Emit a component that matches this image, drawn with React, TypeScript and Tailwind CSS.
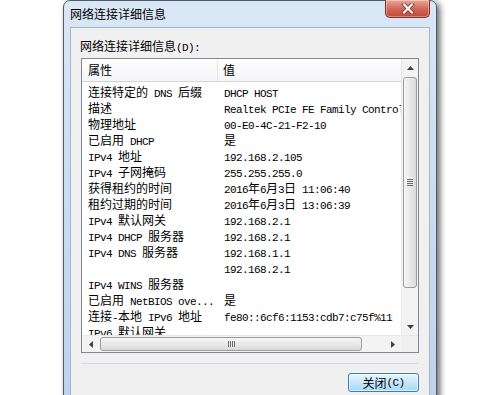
import React from 'react'

const CJK = /[\u3000-\u303f\u4e00-\u9fff\uff00-\uffef]/

// SimSun-like mix: CJK glyphs 12px wide, Latin half width (6px)
function Txt({ s }: { s: string }) {
  const parts = s.split(/([\u3000-\u303f\u4e00-\u9fff\uff00-\uffef]+)/).filter(Boolean)
  return (
    <>
      {parts.map((p, i) =>
        CJK.test(p) ? (
          <span key={i} className="font-['Noto_Sans_CJK_SC',sans-serif] text-[12px]">{p}</span>
        ) : (
          <span key={i} className="font-['Liberation_Mono',monospace] text-[11px] tracking-[-0.6px] whitespace-pre">{p}</span>
        )
      )}
    </>
  )
}

const rows: [string, string][] = [
  ['连接特定的 DNS 后缀', 'DHCP HOST'],
  ['描述', 'Realtek PCIe FE Family Controller'],
  ['物理地址', '00-E0-4C-21-F2-10'],
  ['已启用 DHCP', '是'],
  ['IPv4 地址', '192.168.2.105'],
  ['IPv4 子网掩码', '255.255.255.0'],
  ['获得租约的时间', '2016年6月3日 11:06:40'],
  ['租约过期的时间', '2016年6月3日 13:06:39'],
  ['IPv4 默认网关', '192.168.2.1'],
  ['IPv4 DHCP 服务器', '192.168.2.1'],
  ['IPv4 DNS 服务器', '192.168.1.1'],
  ['', '192.168.2.1'],
  ['IPv4 WINS 服务器', ''],
  ['已启用 NetBIOS ove...', '是'],
  ['连接-本地 IPv6 地址', 'fe80::6cf6:1153:cdb7:c75f%11'],
  ['IPv6 默认网关', ''],
]

function Arrow({ dir }: { dir: 'up' | 'down' | 'left' | 'right' }) {
  const pts = {
    up: '0,4 3.5,0 7,4',
    down: '0,0 3.5,4 7,0',
    left: '4,0 0,3.5 4,7',
    right: '0,0 4,3.5 0,7',
  }[dir]
  const vertical = dir === 'up' || dir === 'down'
  return (
    <svg width={vertical ? 7 : 4} height={vertical ? 4 : 7} viewBox={vertical ? '0 0 7 4' : '0 0 4 7'}>
      <polygon points={pts} fill="#404040" />
    </svg>
  )
}

function VScroll() {
  return (
    <div className="w-[17px] flex flex-col bg-[#f3f3f3] border-l border-[#e8e8e8]">
      <div className="h-[17px] flex items-center justify-center">
        <Arrow dir="up" />
      </div>
      <div className="flex-1 flex flex-col">
        <div className="mt-[1px] mx-[1px] h-[211px] rounded-[3px] border border-[#9d9d9d] bg-gradient-to-r from-[#f6f6f6] via-[#e9e9e9] to-[#d9d9d9] flex flex-col items-center justify-center gap-[1px]">
          <div className="w-[6px] h-px bg-[#6d6d6d]" />
          <div className="w-[6px] h-px bg-[#6d6d6d]" />
          <div className="w-[6px] h-px bg-[#6d6d6d]" />
          <div className="w-[6px] h-px bg-[#6d6d6d]" />
        </div>
      </div>
      <div className="h-[17px] flex items-center justify-center">
        <Arrow dir="down" />
      </div>
    </div>
  )
}

function HScroll() {
  return (
    <div className="h-[17px] flex bg-[#f3f3f3] border-t border-[#e8e8e8]">
      <div className="w-[17px] flex items-center justify-center">
        <Arrow dir="left" />
      </div>
      <div className="flex-1 flex">
        <div className="ml-[1px] my-[1px] w-[262px] rounded-[3px] border border-[#9d9d9d] bg-gradient-to-b from-[#f6f6f6] via-[#e9e9e9] to-[#d9d9d9] flex items-center justify-center gap-[1px]">
          <div className="h-[6px] w-px bg-[#6d6d6d]" />
          <div className="h-[6px] w-px bg-[#6d6d6d]" />
          <div className="h-[6px] w-px bg-[#6d6d6d]" />
          <div className="h-[6px] w-px bg-[#6d6d6d]" />
        </div>
      </div>
      <div className="w-[17px] flex items-center justify-center">
        <Arrow dir="right" />
      </div>
      <div className="w-[17px] bg-[#f0f0f0]" />
    </div>
  )
}

function ListBox() {
  return (
    <div className="ml-[1px] h-[295px] shrink-0 border border-[#828790] bg-white flex flex-col">
      <div className="flex-1 flex min-h-0">
        <div className="flex-1 min-w-0 overflow-hidden flex flex-col text-black">
          {/* Header */}
          <div className="h-[23px] shrink-0 flex border-b border-[#d5d5d5] bg-gradient-to-b from-white to-[#f4f5f7] leading-[16px]">
            <div className="w-[136px] pl-[6px] border-r border-[#e2e5e9] flex items-center">
              <Txt s="属性" />
            </div>
            <div className="pl-[5px] flex items-center">
              <Txt s="值" />
            </div>
          </div>
          {/* Rows */}
          <div className="pt-[1px] flex flex-col">
            {rows.map(([k, v], i) => (
              <div key={i} className="h-[16px] shrink-0 flex leading-[16px] whitespace-nowrap">
                <div className="w-[136px] shrink-0 pl-[6px] overflow-hidden">
                  <Txt s={k} />
                </div>
                <div className="pl-[6px]">
                  <Txt s={v} />
                </div>
              </div>
            ))}
          </div>
        </div>
        <VScroll />
      </div>
      <HScroll />
    </div>
  )
}

function CloseButton() {
  return (
    <div className="-mt-px w-[45px] h-[18px] rounded-b-[5px] border border-t-0 border-[#7d3128] bg-gradient-to-b from-[#e9a89c] via-[#d2685a] to-[#c0483a] flex items-center justify-center shadow-[inset_0_0_0_1px_rgba(255,255,255,0.35)]">
      <svg width="14" height="11" viewBox="0 0 14 11">
        <path d="M3 1.5 L11 9.5 M11 1.5 L3 9.5" stroke="#6b2a22" strokeWidth="3.6" strokeLinecap="square" />
        <path d="M3 1.5 L11 9.5 M11 1.5 L3 9.5" stroke="#ffffff" strokeWidth="2.2" strokeLinecap="square" />
      </svg>
    </div>
  )
}

export default function App() {
  return (
    <div className="w-[489px] h-[395px] overflow-hidden bg-white text-black">
      <div className="flex h-full pl-[63px]">
        <div className="w-[374px] h-[420px] shrink-0 flex flex-col rounded-t-[7px] border border-[#4f5b6b] bg-gradient-to-b from-[#dae7f5] via-[#c9dcf0] to-[#bdd2ea] px-[6px] shadow-[3px_2px_6px_rgba(0,0,0,0.6)]">
          {/* Title bar */}
          <div className="h-[26px] shrink-0 flex items-start justify-between">
            <span className="mt-[4px] leading-[16px]">
              <Txt s="网络连接详细信息" />
            </span>
            <CloseButton />
          </div>

          {/* Body */}
          <div className="flex-1 flex flex-col bg-[#f0f0f0] border border-[#a4b6cb] pl-[9px] pr-[10px] pt-[9px]">
            <div className="leading-[16px] mb-[2px]">
              <Txt s="网络连接详细信息(D):" />
            </div>
            <ListBox />
            <div className="mt-[10px] ml-[1px] h-px bg-[#d6dbe0]" />
            <button className="mt-[9px] self-end w-[71px] h-[19px] rounded-[3px] border border-[#3c7fb1] bg-gradient-to-b from-[#eaf6fd] via-[#c4e6fb] to-[#a7d9f5] leading-[16px] flex items-center justify-center shadow-[inset_0_0_0_1px_rgba(255,255,255,0.6)]">
              <Txt s="关闭(C)" />
            </button>
          </div>
        </div>
      </div>
    </div>
  )
}
